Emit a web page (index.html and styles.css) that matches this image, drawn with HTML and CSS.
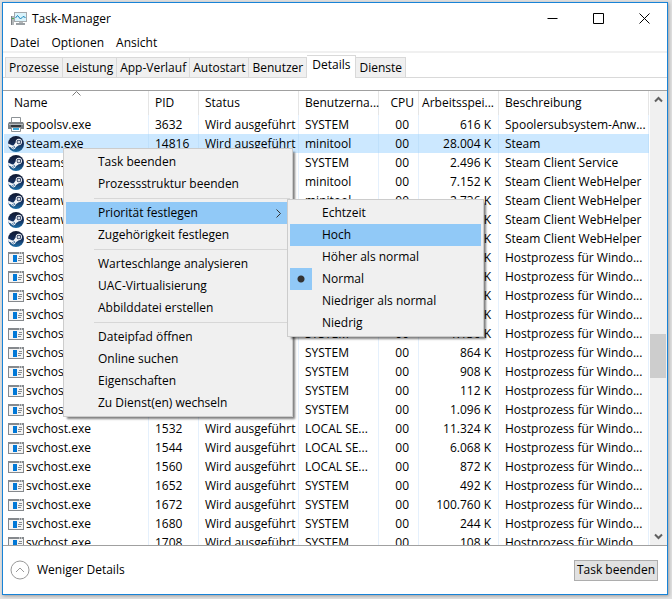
FILE: index.html
```html
<!DOCTYPE html>
<html lang="de">
<head>
    <meta charset="UTF-8">
    <meta name="viewport" content="width=device-width, initial-scale=1.0">
    <title>Task-Manager</title>
    <link rel="stylesheet" href="styles.css">
</head>
<body>

    <!-- icons used more than once -->
    <svg class="sprite" aria-hidden="true">
        <linearGradient id="steamBlue" x1="0" y1="0" x2="0" y2="1">
            <stop offset="0" stop-color="#10182f"/>
            <stop offset="0.5" stop-color="#142c58"/>
            <stop offset="1" stop-color="#1b6fa8"/>
        </linearGradient>
        <symbol id="steam" viewBox="0 0 16 16">
            <circle cx="8" cy="8" r="8" fill="url(#steamBlue)"/>
            <path d="M0 7.600L4.300 9.400Q5 9 5.900 9L7.600 6.400Q7.700 2.900 10.900 2.800Q14 3 14.100 6Q13.900 9.100 10.800 9.200L7.900 11.300Q7.500 13.400 5.400 13.500Q3.500 13.300 3.100 11.600L0.500 10.500Q0 9 0 7.600Z" fill="#f2f4f7"/>
            <circle cx="10.900" cy="6" r="2.300" fill="#16284e"/>
            <circle cx="10.900" cy="6" r="1.500" fill="#d5dae3"/>
            <path d="M4 11.600L5.600 12.200Q7 11.700 6.400 10.400L5.300 9.900" fill="none" stroke="#1a5288" stroke-width="0.800"/>
        </symbol>
        <symbol id="app" viewBox="0 0 16 16">
            <rect x="0.5" y="2.5" width="15" height="11" fill="#f4f4f4" stroke="#85898d"/>
            <path d="M0 3H16" stroke="#85898d" stroke-width="2"/>
            <path d="M11 3h1M13 3h1" stroke="#fff"/>
            <rect x="5" y="5" width="4" height="7" fill="#0078d7"/>
            <path d="M11 6.5h3M10 8.5h4M10 10.5h3" stroke="#85898d"/>
        </symbol>
    </svg>

    <main class="window">
        <header class="titlebar">
            <svg class="logo" width="16" height="16" viewBox="0 0 16 16" aria-hidden="true">
                <path d="M0 5h3v9H0z" fill="#b4b8ba"/>
                <path d="M0.500 5v9" stroke="#7c8184"/>
                <path d="M1 7.500h2" stroke="#4caf50"/>
                <rect x="3.5" y="1.5" width="12" height="9" fill="#d9f3fb" stroke="#a4a9ac"/>
                <path d="M4.500 7L6.500 4.500L9.500 8L12 5.500L14.500 6.500" fill="none" stroke="#1583b8"/>
                <path d="M8 11.500h4" stroke="#b4b8ba"/>
                <path d="M5 13h9" stroke="#9aa0a4" stroke-width="2"/>
            </svg>
            <h1>Task-Manager</h1>
            <div class="controls">
                <button aria-label="Minimieren"><svg width="11" height="11"><path d="M0.5 5.5H10.5"/></svg></button>
                <button aria-label="Maximieren"><svg width="11" height="11"><path d="M0.5 0.5H10.5V10.5H0.5Z"/></svg></button>
                <button aria-label="Schließen"><svg width="11" height="11"><path d="M0.500 0.500L10.500 10.500M10.500 0.500L0.500 10.500"/></svg></button>
            </div>
        </header>

        <nav class="menubar">
            <button>Datei</button>
            <button>Optionen</button>
            <button>Ansicht</button>
        </nav>

        <div class="tabs" role="tablist">
            <button role="tab">Prozesse</button>
            <button role="tab">Leistung</button>
            <button role="tab">App-Verlauf</button>
            <button role="tab">Autostart</button>
            <button role="tab">Benutzer</button>
            <button role="tab" class="active" aria-selected="true">Details</button>
            <button role="tab">Dienste</button>
        </div>

        <section class="list">
            <div class="rows">
                <table>
                    <colgroup>
                        <col class="c-name"><col class="c-pid"><col class="c-status"><col class="c-user"><col class="c-cpu"><col class="c-mem"><col>
                    </colgroup>
                    <thead>
                        <tr>
                            <th>Name<svg class="sort" width="9" height="5" aria-hidden="true"><path d="M0.500 4.500L4.500 0.500L8.500 4.500"/></svg></th>
                            <th>PID</th>
                            <th>Status</th>
                            <th>Benutzerna...</th>
                            <th>CPU</th>
                            <th>Arbeitsspei...</th>
                            <th>Beschreibung</th>
                        </tr>
                    </thead>
                    <tbody>
                        <tr>
                            <td><svg viewBox="0 0 16 16"><path d="M3.500 0.500h9v6h-9z" fill="#fff" stroke="#8d9296"/><path d="M1 5h14l1 2v5H0V7z" fill="#7b8185"/><path d="M1 7.500h14" stroke="#b5babd"/><path d="M3 8h10v2H3z" fill="#33383c"/><path d="M3.500 10.500h9v4h-9z" fill="#fff" stroke="#8d9296"/><path d="M5 11h6v2H5z" fill="#39a9dc"/></svg>spoolsv.exe</td>
                            <td>3632</td><td>Wird ausgeführt</td><td>SYSTEM</td><td>00</td><td>616 K</td><td>Spoolersubsystem-Anw...</td>
                        </tr>
                        <tr class="selected"><td><svg><use href="#steam"/></svg>steam.exe</td><td>14816</td><td>Wird ausgeführt</td><td>minitool</td><td>00</td><td>28.004 K</td><td>Steam</td></tr>
                        <tr><td><svg><use href="#steam"/></svg>steams</td><td></td><td></td><td>SYSTEM</td><td>00</td><td>2.496 K</td><td>Steam Client Service</td></tr>
                        <tr><td><svg><use href="#steam"/></svg>steamw</td><td></td><td></td><td>minitool</td><td>00</td><td>7.152 K</td><td>Steam Client WebHelper</td></tr>
                        <tr><td><svg><use href="#steam"/></svg>steamw</td><td></td><td></td><td>minitool</td><td>00</td><td>2.736 K</td><td>Steam Client WebHelper</td></tr>
                        <tr><td><svg><use href="#steam"/></svg>steamw</td><td></td><td></td><td></td><td></td><td>K</td><td>Steam Client WebHelper</td></tr>
                        <tr><td><svg><use href="#steam"/></svg>steamw</td><td></td><td></td><td></td><td></td><td>K</td><td>Steam Client WebHelper</td></tr>
                        <tr><td><svg><use href="#app"/></svg>svchost</td><td></td><td></td><td></td><td></td><td>K</td><td>Hostprozess für Windo...</td></tr>
                        <tr><td><svg><use href="#app"/></svg>svchost</td><td></td><td></td><td></td><td></td><td>K</td><td>Hostprozess für Windo...</td></tr>
                        <tr><td><svg><use href="#app"/></svg>svchost</td><td></td><td></td><td></td><td></td><td>K</td><td>Hostprozess für Windo...</td></tr>
                        <tr><td><svg><use href="#app"/></svg>svchost</td><td></td><td></td><td></td><td></td><td>K</td><td>Hostprozess für Windo...</td></tr>
                        <tr><td><svg><use href="#app"/></svg>svchost</td><td></td><td></td><td>SYSTEM</td><td>00</td><td>1.136 K</td><td>Hostprozess für Windo...</td></tr>
                        <tr><td><svg><use href="#app"/></svg>svchost</td><td></td><td></td><td>SYSTEM</td><td>00</td><td>864 K</td><td>Hostprozess für Windo...</td></tr>
                        <tr><td><svg><use href="#app"/></svg>svchost</td><td></td><td></td><td>SYSTEM</td><td>00</td><td>908 K</td><td>Hostprozess für Windo...</td></tr>
                        <tr><td><svg><use href="#app"/></svg>svchost</td><td></td><td></td><td>SYSTEM</td><td>00</td><td>112 K</td><td>Hostprozess für Windo...</td></tr>
                        <tr><td><svg><use href="#app"/></svg>svchost</td><td></td><td></td><td>SYSTEM</td><td>00</td><td>1.096 K</td><td>Hostprozess für Windo...</td></tr>
                        <tr><td><svg><use href="#app"/></svg>svchost.exe</td><td>1532</td><td>Wird ausgeführt</td><td>LOCAL SE...</td><td>00</td><td>11.324 K</td><td>Hostprozess für Windo...</td></tr>
                        <tr><td><svg><use href="#app"/></svg>svchost.exe</td><td>1544</td><td>Wird ausgeführt</td><td>LOCAL SE...</td><td>00</td><td>6.068 K</td><td>Hostprozess für Windo...</td></tr>
                        <tr><td><svg><use href="#app"/></svg>svchost.exe</td><td>1560</td><td>Wird ausgeführt</td><td>LOCAL SE...</td><td>00</td><td>872 K</td><td>Hostprozess für Windo...</td></tr>
                        <tr><td><svg><use href="#app"/></svg>svchost.exe</td><td>1652</td><td>Wird ausgeführt</td><td>SYSTEM</td><td>00</td><td>492 K</td><td>Hostprozess für Windo...</td></tr>
                        <tr><td><svg><use href="#app"/></svg>svchost.exe</td><td>1672</td><td>Wird ausgeführt</td><td>SYSTEM</td><td>00</td><td>100.760 K</td><td>Hostprozess für Windo...</td></tr>
                        <tr><td><svg><use href="#app"/></svg>svchost.exe</td><td>1680</td><td>Wird ausgeführt</td><td>SYSTEM</td><td>00</td><td>244 K</td><td>Hostprozess für Windo...</td></tr>
                        <tr><td><svg><use href="#app"/></svg>svchost.exe</td><td>1708</td><td>Wird ausgeführt</td><td>SYSTEM</td><td>00</td><td>108 K</td><td>Hostprozess für Windo...</td></tr>
                    </tbody>
                </table>
            </div>
            <div class="scrollbar">
                <button aria-label="Nach oben"><svg width="9" height="7"><path d="M1 5.500L4.500 2L8 5.500"/></svg></button>
                <div class="track-top"></div>
                <div class="thumb"></div>
                <div class="track-bottom"></div>
                <button aria-label="Nach unten"><svg width="9" height="7"><path d="M1 1.500L4.500 5L8 1.500"/></svg></button>
            </div>
        </section>

        <footer class="footer">
            <button class="less"><svg width="20" height="20"><circle cx="10" cy="10" r="9"/><path d="M6 12L10 8L14 12"/></svg>Weniger Details</button>
            <button class="end-task">Task beenden</button>
        </footer>

        <div class="menu context" role="menu">
            <button role="menuitem">Task beenden</button>
            <button role="menuitem">Prozessstruktur beenden</button>
            <hr>
            <button role="menuitem" class="hot">Priorität festlegen<svg width="5" height="9"><path d="M0.500 0.500L4.500 4.500L0.500 8.500"/></svg></button>
            <button role="menuitem">Zugehörigkeit festlegen</button>
            <hr>
            <button role="menuitem">Warteschlange analysieren</button>
            <button role="menuitem">UAC-Virtualisierung</button>
            <button role="menuitem">Abbilddatei erstellen</button>
            <hr>
            <button role="menuitem">Dateipfad öffnen</button>
            <button role="menuitem">Online suchen</button>
            <button role="menuitem">Eigenschaften</button>
            <button role="menuitem">Zu Dienst(en) wechseln</button>
        </div>

        <div class="menu priority" role="menu">
            <button role="menuitemradio">Echtzeit</button>
            <button role="menuitemradio" class="hot">Hoch</button>
            <button role="menuitemradio">Höher als normal</button>
            <button role="menuitemradio" class="checked" aria-checked="true">Normal</button>
            <button role="menuitemradio">Niedriger als normal</button>
            <button role="menuitemradio">Niedrig</button>
        </div>
    </main>

</body>
</html>
```

FILE: styles.css
```css
* {
    margin: 0;
    padding: 0;
    box-sizing: border-box;
}

body {
    height: 100vh;
    padding: 2px 4px 4px 2px;
    background: #e0e0e0;
    color: #000;
    font-family: "Segoe UI", "Open Sans", sans-serif;
    font-size: 12px;
    line-height: 16px;
}

button {
    border: none;
    background: none;
    color: inherit;
    font: inherit;
    white-space: nowrap;
}

.sprite {
    position: absolute;
    width: 0;
    height: 0;
}

.window {
    position: relative;
    display: flex;
    flex-direction: column;
    height: 100%;
    border: 1px solid #1883d7;
    background: #fff;
    box-shadow: 1px 1px 3px rgba(0, 0, 0, 0.3);
}

/* title bar */
.titlebar {
    display: flex;
    align-items: center;
    height: 31px;
    padding-left: 8px;
}

.titlebar h1 {
    flex: 1;
    margin-left: 5px;
    font-size: 12px;
    font-weight: normal;
}

.controls {
    display: flex;
}

.controls button {
    display: flex;
    align-items: center;
    justify-content: center;
    width: 46px;
    height: 28px;
}

.controls path {
    fill: none;
    stroke: #000;
}

.menubar {
    display: flex;
    gap: 12px;
    height: 19px;
    padding-left: 7px;
    border-bottom: 2px solid #f0f0f0;
}

/* tabs */
.tabs {
    display: flex;
    align-items: flex-end;
    height: 25px;
    margin-bottom: 12px;
    padding-left: 2px;
    border-bottom: 1px solid #d9d9d9;
}

.tabs button {
    height: 20px;
    padding: 0 3px;
    border: 1px solid #d9d9d9;
    border-width: 1px 1px 0 0;
    background: #f0f0f0;
}

.tabs button:first-child {
    border-left-width: 1px;
}

.tabs .active {
    height: 23px;
    margin-bottom: -1px;
    padding: 0 5px 4px;
    background: #fff;
}

/* process list */
.list {
    display: flex;
    flex: 1;
    min-height: 0;
    padding-left: 1px;
    border-top: 1px solid #a0a0a0;
    border-bottom: 1px solid #a0a0a0;
}

.rows {
    flex: 1;
    overflow: hidden;
}

table {
    width: 100%;
    border-collapse: separate;
    border-spacing: 0;
    table-layout: fixed;
}

.c-name { width: 145px; }
.c-pid { width: 50px; }
.c-status { width: 100px; }
.c-user,
.c-mem { width: 80px; }
.c-cpu { width: 40px; }

th,
td {
    height: 19px;
    padding: 0 0 0 6px;
    border-right: 1px solid #e5f0fc;
    font-weight: normal;
    text-align: left;
    white-space: nowrap;
}

th {
    position: relative;
    height: 24px;
    border-right-color: #e5e5e5;
}

th:first-child {
    padding-left: 10px;
}

th:nth-child(5),
th:nth-child(6) {
    padding: 0 4px 0 0;
    text-align: right;
}

td:first-child {
    padding-left: 4px;
}

td:nth-child(5) {
    padding-right: 9px;
    text-align: right;
}

td:nth-child(6) {
    padding: 0 7px 0 0;
    text-align: right;
}

td svg {
    width: 16px;
    height: 16px;
    margin-right: 2px;
    vertical-align: top;
}

.sort {
    position: absolute;
    top: 0;
    left: 68px;
    fill: none;
    stroke: #7a7a7a;
}

.selected td {
    border-right-color: #bfe0fb;
    background: #cce8ff;
}

/* scroll bar */
.scrollbar {
    display: flex;
    flex-direction: column;
    width: 17px;
    margin-left: 1px;
    padding-right: 1px;
    background: #f0f0f0;
}

.scrollbar button {
    display: flex;
    align-items: center;
    justify-content: center;
    height: 17px;
}

.scrollbar path {
    fill: none;
    stroke: #606060;
    stroke-width: 2;
}

.track-top {
    flex: 3;
}

.track-bottom {
    flex: 2;
}

.thumb {
    height: 44px;
    background: #cdcdcd;
}

/* footer */
.footer {
    display: flex;
    align-items: center;
    justify-content: space-between;
    height: 48px;
    padding: 0 9px 0 7px;
}

.less {
    display: flex;
    align-items: center;
    gap: 7px;
}

.less svg {
    fill: none;
    stroke: #999;
}

.end-task {
    height: 21px;
    padding: 0 2px;
    border: 1px solid #adadad;
    background: #e1e1e1;
}

/* popup menus */
.menu {
    position: absolute;
    display: flex;
    flex-direction: column;
    padding: 2px;
    border: 1px solid #ccc;
    background: #f0f0f0;
    box-shadow: 3px 3px 2px -1px rgba(0, 0, 0, 0.5);
}

.menu button {
    display: flex;
    align-items: center;
    height: 22px;
    padding-left: 32px;
    text-align: left;
}

.menu hr {
    margin: 3px 0 3px 28px;
    border: none;
    border-top: 1px solid #d7d7d7;
}

.menu .hot {
    background: #91c9f7;
}

.menu .hot svg {
    margin: 0 9px 0 auto;
    fill: none;
    stroke: #333;
}

.context {
    top: 145px;
    left: 60px;
    width: 230px;
}

.priority {
    top: 196px;
    left: 284px;
    width: 197px;
}

.menu .checked {
    padding-left: 0;
}

.checked::before {
    content: "";
    width: 22px;
    height: 22px;
    margin-right: 10px;
    background: radial-gradient(circle, #333 3px, #91c9f7 4px);
}
```
